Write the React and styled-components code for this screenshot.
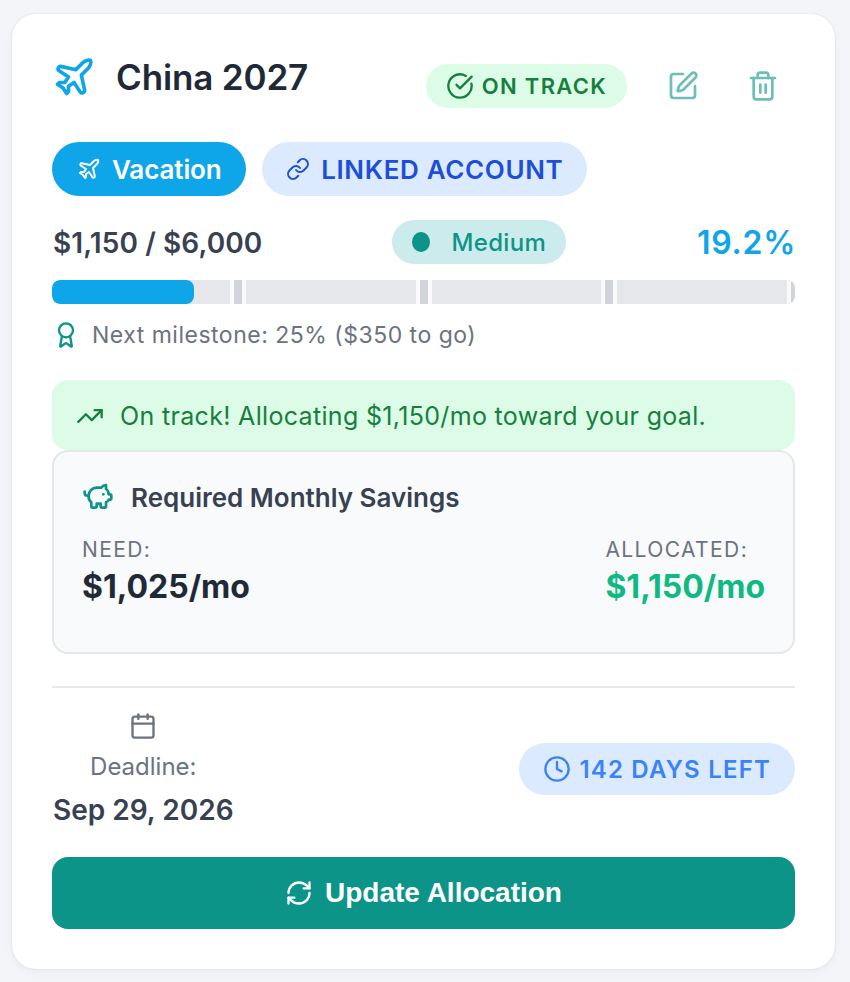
import React from 'react';
import styled, { createGlobalStyle } from 'styled-components';
import {
  Plane,
  CircleCheckBig,
  SquarePen,
  Trash2,
  Link,
  Award,
  TrendingUp,
  PiggyBank,
  Calendar,
  Clock,
  RefreshCw,
} from 'lucide-react';

const GlobalStyle = createGlobalStyle`
  html, body {
    margin: 0;
    padding: 0;
    background: #f3f5f9;
  }
  body {
    font-family: Inter, "Liberation Sans", sans-serif;
  }
  * {
    box-sizing: border-box;
  }
`;

const Page = styled.div`
  width: 850px;
  height: 982px;
  padding: 14px 15px 13px 12px;
  overflow: hidden;
`;

const Card = styled.div`
  height: 955px;
  background: #fff;
  border-radius: 24px;
  padding: 40px;
  box-shadow: 0 0 2px rgba(0, 0, 0, 0.12), 0 4px 10px rgba(0, 0, 0, 0.04);
`;

const Header = styled.div`
  display: flex;
  justify-content: space-between;
  align-items: flex-start;
  height: 54px;
  margin-bottom: 34px;
`;

const TitleGroup = styled.div`
  display: flex;
  align-items: center;
  gap: 20px;
  color: #0ea5e9;
`;

const Title = styled.h2`
  margin: 0;
  font-size: 35px;
  font-weight: 600;
  line-height: 46px;
  letter-spacing: -0.15px;
  color: #1f2937;
`;

const Actions = styled.div`
  display: flex;
  align-items: center;
  margin-top: 10px;
  margin-right: 16px;
`;

const IconButton = styled.button`
  display: flex;
  border: 0;
  padding: 0;
  background: none;
  color: #0d9488;
  opacity: 0.6;
  margin-left: ${(p) => p.$gap}px;
`;

const Pill = styled.span`
  display: inline-flex;
  align-items: center;
  height: ${(p) => p.$h}px;
  padding: 0 ${(p) => p.$px}px;
  gap: ${(p) => p.$gap}px;
  border-radius: ${(p) => p.$h / 2}px;
  background: ${(p) => p.$bg};
  color: ${(p) => p.$color};
  font-size: ${(p) => p.$size}px;
  font-weight: ${(p) => p.$weight || 600};
  letter-spacing: ${(p) => p.$ls || 0}px;
  white-space: nowrap;
`;

const DaysPill = styled(Pill)`
  margin-bottom: 2px;
`;

const ChipRow = styled.div`
  display: flex;
  gap: 16px;
  margin-bottom: 24px;
`;

const StatsRow = styled.div`
  display: grid;
  grid-template-columns: 340px 174px 1fr;
  align-items: center;
  height: 44px;
  margin-bottom: 16px;
`;

const Amount = styled.div`
  margin: 2px 0 0 1px;
  font-size: 28px;
  font-weight: 600;
  letter-spacing: 0.1px;
  color: #374151;
`;

const Percent = styled.div`
  margin: 1px -1px 0 0;
  font-size: 32px;
  font-weight: 600;
  letter-spacing: 0.7px;
  color: #0ea5e9;
  text-align: right;
`;

const Dot = styled.span`
  width: 20px;
  height: 20px;
  border-radius: 50%;
  background: #0d9488;
`;

const Track = styled.div`
  position: relative;
  height: 24px;
  background: #e5e7eb;
  border-radius: 8px;
  overflow: hidden;
  margin-bottom: 16px;
`;

const Fill = styled.div`
  height: 100%;
  background: #0ea5e9;
  border-radius: 8px;
`;

const Tick = styled.span`
  position: absolute;
  top: 0;
  bottom: 0;
  width: 16px;
  transform: translateX(-50%);
  background: #d1d5db;
  border-left: 4px solid #fafafb;
  border-right: 4px solid #fafafb;
`;

const Milestone = styled.div`
  display: flex;
  align-items: center;
  gap: 12px;
  height: 30px;
  margin-bottom: 30px;
  font-size: 23px;
  letter-spacing: 0.5px;
  color: #6b7280;
  svg {
    color: #0d9488;
  }
`;

const Alert = styled.div`
  display: flex;
  align-items: center;
  gap: 16px;
  height: 70px;
  padding: 1px 24px 0;
  border-radius: 16px;
  background: #dcfce7;
  color: #15803d;
  font-size: 25px;
  letter-spacing: 0.33px;
`;

const SavingsBox = styled.div`
  height: 204px;
  padding: 28px;
  background: #f8fafc;
  border: 2px solid #e5e7eb;
  border-radius: 16px;
  margin-bottom: 32px;
`;

const SavingsTitle = styled.div`
  display: flex;
  align-items: center;
  gap: 17px;
  height: 34px;
  margin-bottom: 24px;
  font-size: 26px;
  font-weight: 600;
  color: #374151;
  svg {
    color: #0d9488;
  }
`;

const SavingsRow = styled.div`
  display: flex;
  justify-content: space-between;
`;

const SavingsCol = styled.div`
  display: flex;
  flex-direction: column;
  gap: 5px;
`;

const SavingsLabel = styled.span`
  font-size: 21px;
  line-height: 24px;
  letter-spacing: 1.4px;
  color: #6b7280;
`;

const SavingsValue = styled.span`
  font-size: 32px;
  line-height: 40px;
  font-weight: 700;
  color: ${(p) => p.$color};
`;

const Footer = styled.div`
  display: flex;
  justify-content: space-between;
  align-items: center;
  border-top: 2px solid #e5e7eb;
  padding-top: 24px;
  margin-bottom: 29px;
`;

const Deadline = styled.div`
  display: flex;
  flex-direction: column;
  align-items: center;
  margin-left: 1px;
  color: #6b7280;
`;

const DeadlineLabel = styled.span`
  font-size: 24px;
  line-height: 30px;
  margin-top: 12px;
`;

const DeadlineDate = styled.span`
  font-size: 28px;
  line-height: 36px;
  font-weight: 600;
  color: #374151;
  margin-top: 10px;
`;

const UpdateButton = styled.button`
  display: flex;
  align-items: center;
  justify-content: center;
  gap: 12px;
  width: 100%;
  height: 72px;
  border: 0;
  border-radius: 16px;
  background: #0d9488;
  color: #fff;
  font-family: "Liberation Sans", Arial, sans-serif;
  font-size: 28px;
  font-weight: 700;
`;

const milestones = [25, 50, 75, 100];

export default function App() {
  return (
    <Page>
      <GlobalStyle />
      <Card>
        <Header>
          <TitleGroup>
            <Plane size={44} strokeWidth={2} />
            <Title>China 2027</Title>
          </TitleGroup>
          <Actions>
            <Pill $h={44} $px={20} $gap={8} $size={22} $ls={1.3} $bg="#dcfce7" $color="#15803d">
              <CircleCheckBig size={28} />
              ON TRACK
            </Pill>
            <IconButton $gap={40}>
              <SquarePen size={32} />
            </IconButton>
            <IconButton $gap={48}>
              <Trash2 size={32} />
            </IconButton>
          </Actions>
        </Header>

        <ChipRow>
          <Pill $h={54} $px={24.5} $gap={11.5} $size={26} $ls={-0.1} $bg="#0ea5e9" $color="#fff">
            <Plane size={24} />
            Vacation
          </Pill>
          <Pill $h={54} $px={24} $gap={11} $size={26} $ls={0.65} $bg="#dbeafe" $color="#1d4ed8">
            <Link size={24} />
            LINKED ACCOUNT
          </Pill>
        </ChipRow>

        <StatsRow>
          <Amount>$1,150 / $6,000</Amount>
          <Pill $h={44} $px={20} $gap={22} $size={24} $weight={500} $ls={0.3} $bg="#ccebec" $color="#0d9488">
            <Dot />
            Medium
          </Pill>
          <Percent>19.2%</Percent>
        </StatsRow>

        <Track>
          <Fill style={{ width: '19.1%' }} />
          {milestones.map((m) => (
            <Tick key={m} style={{ left: `${m}%` }} />
          ))}
        </Track>

        <Milestone>
          <Award size={28} />
          Next milestone: 25% ($350 to go)
        </Milestone>

        <Alert>
          <TrendingUp size={28} />
          On track! Allocating $1,150/mo toward your goal.
        </Alert>

        <SavingsBox>
          <SavingsTitle>
            <PiggyBank size={32} />
            Required Monthly Savings
          </SavingsTitle>
          <SavingsRow>
            <SavingsCol>
              <SavingsLabel>NEED:</SavingsLabel>
              <SavingsValue $color="#1f2937">$1,025/mo</SavingsValue>
            </SavingsCol>
            <SavingsCol>
              <SavingsLabel>ALLOCATED:</SavingsLabel>
              <SavingsValue $color="#10b981">$1,150/mo</SavingsValue>
            </SavingsCol>
          </SavingsRow>
        </SavingsBox>

        <Footer>
          <Deadline>
            <Calendar size={28} />
            <DeadlineLabel>Deadline:</DeadlineLabel>
            <DeadlineDate>Sep 29, 2026</DeadlineDate>
          </Deadline>
          <DaysPill $h={52} $px={24} $gap={8} $size={24} $ls={1.2} $bg="#dbeafe" $color="#3b82f6">
            <Clock size={28} />
            142 DAYS LEFT
          </DaysPill>
        </Footer>

        <UpdateButton>
          <RefreshCw size={28} />
          Update Allocation
        </UpdateButton>
      </Card>
    </Page>
  );
}
